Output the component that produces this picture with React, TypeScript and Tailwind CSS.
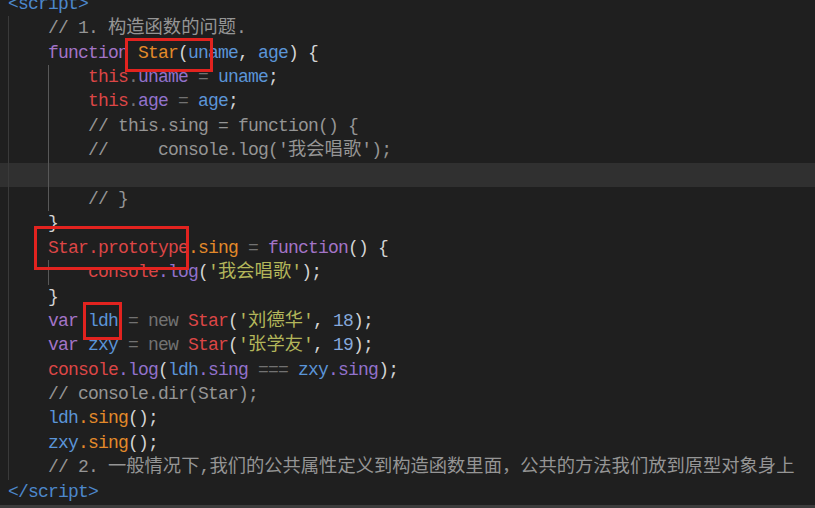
type Tok = { t: string; c: string; cjk?: boolean };

const C = {
  tag: "text-[#4d88cc]",
  kw: "text-[#a374c7]",
  fn: "text-[#e38a2a]",
  red: "text-[#dc4646]",
  prop: "text-[#9272cc]",
  id: "text-[#5b95d8]",
  op: "text-[#727272]",
  pn: "text-[#d4d4d4]",
  str: "text-[#b3b65a]",
  num: "text-[#86a9dc]",
  cm: "text-[#959595]",
};

const s = (t: string, c: string, cjk?: boolean): Tok => ({ t, c, cjk });

const str = (v: string): Tok[] => [s("'", C.str), s(v, C.str, true), s("'", C.str)];

const lines: { indent: number; toks: Tok[]; active?: boolean }[] = [
  { indent: 0, toks: [s("<script>", C.tag)] },
  { indent: 1, toks: [s("// 1. ", C.cm), s("构造函数的问题", C.cm, true), s(".", C.cm)] },
  {
    indent: 1,
    toks: [
      s("function", C.kw), s(" ", C.pn), s("Star", C.fn), s("(", C.pn), s("uname", C.id),
      s(", ", C.pn), s("age", C.id), s(") {", C.pn),
    ],
  },
  { indent: 2, toks: [s("this", C.red), s(".", C.op), s("uname", C.prop), s(" = ", C.op), s("uname", C.id), s(";", C.pn)] },
  { indent: 2, toks: [s("this", C.red), s(".", C.op), s("age", C.prop), s(" = ", C.op), s("age", C.id), s(";", C.pn)] },
  { indent: 2, toks: [s("// this.sing = function() {", C.cm)] },
  { indent: 2, toks: [s("//     console.log('", C.cm), s("我会唱歌", C.cm, true), s("');", C.cm)] },
  { indent: 2, toks: [], active: true },
  { indent: 2, toks: [s("// }", C.cm)] },
  { indent: 1, toks: [s("}", C.pn)] },
  {
    indent: 1,
    toks: [
      s("Star", C.red), s(".prototype", C.red), s(".sing", C.fn), s(" = ", C.op),
      s("function", C.kw), s("() {", C.pn),
    ],
  },
  { indent: 2, toks: [s("console", C.red), s(".log", C.prop), s("(", C.pn), ...str("我会唱歌"), s(");", C.pn)] },
  { indent: 1, toks: [s("}", C.pn)] },
  {
    indent: 1,
    toks: [
      s("var", C.kw), s(" ", C.pn), s("ldh", C.id), s(" = new ", C.op), s("Star", C.red), s("(", C.pn),
      ...str("刘德华"), s(", ", C.pn), s("18", C.num), s(");", C.pn),
    ],
  },
  {
    indent: 1,
    toks: [
      s("var", C.kw), s(" ", C.pn), s("zxy", C.id), s(" = new ", C.op), s("Star", C.red), s("(", C.pn),
      ...str("张学友"), s(", ", C.pn), s("19", C.num), s(");", C.pn),
    ],
  },
  {
    indent: 1,
    toks: [
      s("console", C.red), s(".log", C.prop), s("(", C.pn), s("ldh", C.id), s(".sing", C.prop),
      s(" === ", C.op), s("zxy", C.id), s(".sing", C.prop), s(");", C.pn),
    ],
  },
  { indent: 1, toks: [s("// console.dir(Star);", C.cm)] },
  { indent: 1, toks: [s("ldh", C.id), s(".sing", C.fn), s("();", C.pn)] },
  { indent: 1, toks: [s("zxy", C.id), s(".sing", C.fn), s("();", C.pn)] },
  {
    indent: 1,
    toks: [
      s("// 2. ", C.cm), s("一般情况下", C.cm, true), s(",", C.cm),
      s("我们的公共属性定义到构造函数里面，公共的方法我们放到原型对象身上", C.cm, true),
    ],
  },
  { indent: 0, toks: [s("</script>", C.tag)] },
];

export default function App() {
  return (
    <div
      className="relative w-[815px] h-[508px] overflow-hidden bg-[#1f1f1f] flex flex-col"
      style={{ fontFamily: '"Liberation Mono", "Noto Sans CJK SC", monospace' }}
    >
      <div className="flex-1 overflow-hidden">
        <div className="-mt-[8.2px] text-[18px] tracking-[-0.8px] whitespace-pre">
          {lines.map((ln, i) => (
            <div
              key={i}
              className={`flex h-[24.4px] leading-[24.4px] pl-[8px] ${ln.active ? "bg-[#303030]" : ""}`}
            >
              {ln.indent >= 1 && <span className="w-[40px] shrink-0 h-full border-l border-[#3a3a3a]" />}
              {ln.indent >= 2 && <span className="w-[40px] shrink-0 h-full border-l border-[#585858]" />}
              <span>
                {ln.toks.map((tk, j) => (
                  <span key={j} className={`${tk.c} ${tk.cjk ? "tracking-normal text-[18.3px]" : ""}`}>
                    {tk.t}
                  </span>
                ))}
              </span>
            </div>
          ))}
        </div>
      </div>
      <div className="h-[3px] bg-[#3c3c3c]" />

      {/* annotation boxes */}
      <div className="absolute left-[125px] top-[38px] w-[88px] h-[34px] border-[3px] border-[#e2231f]" />
      <div className="absolute left-[34px] top-[226px] w-[155px] h-[44px] border-[3px] border-[#e2231f]" />
      <div className="absolute left-[83px] top-[302px] w-[39px] h-[38px] border-[3px] border-[#e2231f]" />
    </div>
  );
}
